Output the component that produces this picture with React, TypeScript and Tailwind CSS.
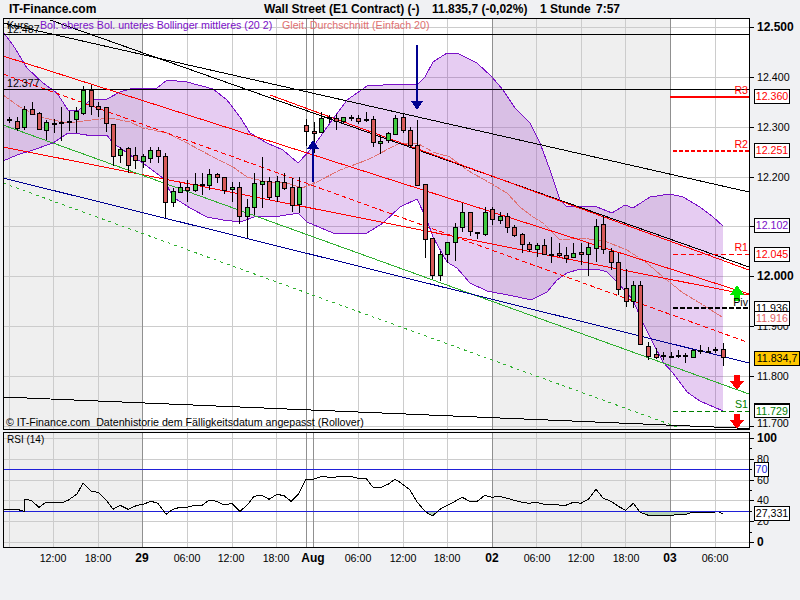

const UPPER = '3,32 13,45 27,68 43,83 57,93 68,110 78,111 90,100 107,99 120,92 133,88 157,88 167,80 187,82 213,89 227,100 240,117 250,133 267,143 283,150 298,163 313,147 330,123 347,100 367,86 400,84 417,85 425,77 433,62 447,53 457,53 477,63 492,77 503,90 515,108 530,123 540,143 550,170 560,200 566,206 578,206 597,207 612,213 625,205 633,208 650,197 670,194 683,197 700,207 712,216 723,226'
const LOWER = '723,411 700,401 687,392 673,373 663,362 653,343 643,323 633,300 617,282 607,272 597,269 580,269 567,273 557,280 547,292 533,299 527,299 513,296 487,291 470,283 457,268 447,262 433,237 427,220 417,199 400,207 383,223 367,233 333,233 307,222 298,213 293,214 280,216 257,216 240,222 223,220 207,217 190,208 173,197 163,178 143,163 133,157 113,143 107,135 93,136 80,134 68,133 53,143 33,150 17,155 3,161'
const MA = '3,95 20,107 40,117 67,123 83,121 110,118 130,122 143,128 167,133 187,143 213,157 233,167 247,177 267,182 287,183 302,188 317,182 340,170 367,160 400,143 417,143 433,152 450,157 467,170 490,183 507,193 520,207 533,217 543,223 560,240 583,238 607,242 627,250 647,263 663,277 683,293 700,303 722,317'

// x, high, body top, body bottom, low (3x zoom units), kind
const CANDLES: [number, number, number, number, number, string][] = [
  [28, 350, 358, 362, 370, 'd'], [50, 350, 362, 383, 392, 'r'], [73, 318, 328, 383, 390, 'g'], [95, 306, 328, 342, 345, 'r'],
  [117, 335, 340, 388, 390, 'r'], [139, 360, 367, 392, 420, 'g'], [161, 358, 368, 372, 400, 'd'], [184, 322, 366, 369, 423, 'd'],
  [206, 333, 363, 368, 393, 'd'], [229, 320, 334, 358, 398, 'g'], [250, 258, 270, 338, 345, 'g'], [272, 255, 270, 317, 345, 'r'],
  [295, 306, 317, 325, 350, 'r'], [317, 322, 322, 370, 395, 'r'], [339, 373, 373, 470, 497, 'r'], [361, 440, 448, 467, 490, 'g'],
  [384, 440, 445, 497, 520, 'r'], [406, 440, 465, 480, 507, 'r'], [428, 462, 468, 482, 503, 'g'], [451, 442, 450, 473, 490, 'g'],
  [473, 442, 451, 470, 488, 'r'], [496, 460, 469, 607, 655, 'r'], [518, 565, 574, 607, 620, 'g'], [541, 548, 560, 575, 580, 'g'],
  [562, 540, 560, 569, 605, 'r'], [584, 520, 552, 569, 577, 'g'], [606, 520, 552, 554, 585, 'd'], [628, 507, 522, 554, 570, 'g'],
  [651, 520, 523, 533, 550, 'r'], [673, 530, 532, 570, 582, 'r'], [696, 545, 562, 569, 605, 'g'], [718, 545, 562, 648, 672, 'r'],
  [740, 598, 622, 648, 714, 'g'], [763, 520, 550, 622, 645, 'g'], [785, 470, 543, 551, 625, 'g'], [808, 530, 542, 590, 600, 'r'],
  [830, 528, 544, 590, 605, 'g'], [852, 518, 545, 563, 570, 'r'], [875, 535, 562, 617, 635, 'r'], [897, 532, 562, 612, 640, 'g'],
  [919, 357, 376, 395, 437, 'r'], [941, 367, 394, 401, 460, 'r'], [964, 335, 355, 398, 400, 'g'], [986, 345, 350, 358, 370, 'd'],
  [1008, 343, 355, 365, 390, 'r'], [1030, 350, 352, 365, 372, 'g'], [1052, 345, 352, 355, 362, 'd'], [1075, 345, 355, 365, 372, 'r'],
  [1097, 335, 357, 362, 365, 'd'], [1119, 348, 358, 428, 442, 'r'], [1141, 405, 424, 430, 462, 'g'], [1164, 395, 400, 422, 430, 'g'],
  [1186, 345, 355, 402, 405, 'g'], [1210, 340, 350, 388, 398, 'r'], [1231, 380, 391, 437, 440, 'r'], [1252, 360, 436, 557, 557, 'r'],
  [1275, 553, 553, 718, 773, 'r'], [1297, 715, 715, 827, 838, 'r'], [1320, 752, 763, 827, 842, 'g'], [1342, 727, 727, 763, 788, 'g'],
  [1365, 670, 682, 727, 782, 'g'], [1387, 610, 637, 682, 695, 'g'], [1409, 637, 637, 695, 708, 'r'], [1432, 696, 696, 702, 717, 'd'],
  [1454, 620, 637, 702, 708, 'g'], [1477, 620, 628, 658, 675, 'r'], [1499, 635, 647, 658, 672, 'g'], [1521, 638, 648, 680, 698, 'r'],
  [1543, 675, 682, 705, 710, 'r'], [1565, 698, 703, 733, 758, 'r'], [1588, 725, 733, 748, 755, 'r'], [1610, 728, 735, 746, 772, 'g'],
  [1632, 718, 735, 763, 765, 'r'], [1654, 710, 761, 764, 788, 'd'], [1677, 728, 760, 767, 770, 'r'], [1698, 740, 765, 773, 788, 'r'],
  [1720, 730, 760, 772, 775, 'g'], [1743, 730, 757, 763, 795, 'r'], [1765, 730, 742, 763, 827, 'g'], [1788, 658, 677, 742, 787, 'g'],
  [1810, 648, 673, 748, 762, 'r'], [1833, 745, 752, 785, 810, 'r'], [1855, 758, 785, 865, 885, 'r'], [1877, 808, 865, 905, 920, 'r'],
  [1900, 842, 856, 905, 923, 'g'], [1921, 842, 856, 1032, 1032, 'r'], [1945, 1025, 1038, 1067, 1080, 'r'], [1967, 1045, 1063, 1073, 1077, 'r'],
  [1990, 1055, 1066, 1068, 1080, 'd'], [2012, 1055, 1067, 1069, 1075, 'd'], [2034, 1050, 1066, 1068, 1075, 'd'], [2056, 1058, 1064, 1066, 1088, 'd'],
  [2078, 1048, 1050, 1070, 1073, 'g'], [2101, 1035, 1050, 1052, 1063, 'd'], [2123, 1040, 1052, 1054, 1060, 'd'], [2146, 1040, 1048, 1050, 1058, 'd'],
  [2168, 1028, 1048, 1073, 1097, 'r'],
]

const RSI = '3,1529 10,1528 17,1528 24,1534 24,1498 31,1501 39,1522 46,1507 63,1507 68,1501 77,1482 83,1450 91,1473 98,1477 107,1503 113,1528 120,1516 128,1528 137,1516 143,1513 151,1504 158,1510 166,1543 173,1528 180,1522 188,1521 195,1516 202,1516 209,1501 217,1504 224,1515 232,1510 240,1534 247,1516 254,1489 262,1486 269,1498 277,1483 284,1487 291,1504 299,1480 306,1438 313,1438 321,1430 333,1432 343,1429 350,1429 357,1434 366,1435 373,1462 381,1462 388,1453 395,1438 400,1447'
const RSI_POINTS = RSI.split(' ').map(p => {
  const [x, y] = p.split(',').map(Number)
  return `${x},${(y / 3).toFixed(1)}`
}).join(' ')
const RSI2 = [[0, 172], [30, 195], [52, 232], [75, 259], [97, 273], [120, 253], [142, 241], [165, 229], [187, 217], [209, 229], [232, 229], [254, 211], [277, 217], [299, 214], [321, 220], [343, 226], [365, 232], [388, 235], [410, 232], [432, 238], [497, 241], [520, 232], [543, 235], [565, 223], [588, 193], [610, 220], [633, 229], [655, 244], [677, 256], [700, 235], [720, 262], [745, 271], [812, 271], [860, 267], [878, 262], [945, 262]]
const RSI2_POINTS = RSI2.map(([x, y]) => `${(400 + x / 3).toFixed(1)},${(425 + y / 3).toFixed(1)}`).join(' ')

const GRID_X = [9.5, 53.5, 98.5, 187.5, 232.5, 276.5, 358.5, 403.5, 447.5, 536.5, 581.5, 625.5, 715.5]
const DARK_X = [142.5, 306.5, 313.5, 492.5, 670.5]
const GRID_Y = [27, 77, 127, 177, 226, 276, 326, 376, 426]
const RSI_GRID_Y = [438, 459, 480, 500, 521, 542]

const AXIS = [
  { y: 27, t: '12.500', bold: true }, { y: 77, t: '12.400' }, { y: 127, t: '12.300' }, { y: 177, t: '12.200' }, { y: 226, t: '12.100' },
  { y: 276, t: '12.000', bold: true }, { y: 326, t: '11.900' }, { y: 376, t: '11.800' }, { y: 423, t: '11.700' },
]
const RSI_AXIS = [
  { y: 438, t: '100', bold: true }, { y: 459, t: '80' }, { y: 480, t: '60' }, { y: 500, t: '40' }, { y: 521, t: '20' }, { y: 542, t: '0', bold: true },
]
const TIMES = [
  { x: 53, t: '12:00' }, { x: 98, t: '18:00' }, { x: 142, t: '29', bold: true }, { x: 187, t: '06:00' }, { x: 231, t: '12:00' }, { x: 276, t: '18:00' },
  { x: 313, t: 'Aug', bold: true }, { x: 358, t: '06:00' }, { x: 403, t: '12:00' }, { x: 447, t: '18:00' }, { x: 492, t: '02', bold: true },
  { x: 537, t: '06:00' }, { x: 581, t: '12:00' }, { x: 626, t: '18:00' }, { x: 670, t: '03', bold: true }, { x: 715, t: '06:00' },
]

const BOXES = [
  { t: '12.360', c: 'top-[71px] text-[#ff0000]' },
  { t: '12.251', c: 'top-[125px] text-[#ff0000]' },
  { t: '12.102', c: 'top-[200px] text-[#7a10c8]' },
  { t: '12.045', c: 'top-[229px] text-[#ff0000]' },
  { t: '11.936', c: 'top-[283px] text-black' },
  { t: '11.916', c: 'top-[293px] text-[#e06060]' },
  { t: '11.729', c: 'top-[385px] text-[#008000] border-t-2' },
]

function Chart() {
  return (
    <svg viewBox="0 18 800 412" className="block w-[800px] h-[412px]" fill="none">
      <g shapeRendering="crispEdges">
        <rect x="3" y="18" width="746" height="411" fill="#ffffff" />
        <rect x="4" y="19" width="139" height="410" fill="#efefef" />
        <rect x="492" y="19" width="178" height="410" fill="#efefef" />
        {GRID_X.map(x => <line key={x} x1={x} y1="19" x2={x} y2="429" stroke="#cccccc" />)}
        {GRID_Y.map(y => <line key={y} x1="4" y1={y + 0.5} x2="749" y2={y + 0.5} stroke="#cccccc" />)}
        {DARK_X.map(x => <line key={x} x1={x} y1="19" x2={x} y2="429" stroke="#909090" />)}
      </g>
      <polygon points={`${UPPER} ${LOWER}`} fill="#8000c0" fillOpacity="0.2" />
      <g shapeRendering="crispEdges">
        <polyline points={UPPER} stroke="#7a10c8" />
        <polyline points={LOWER} stroke="#7a10c8" />
        <polyline points={MA} stroke="#e07070" strokeDasharray="7 1" />
        <line x1="3" y1="34.5" x2="749" y2="34.5" stroke="#000000" />
        <line x1="3" y1="89.5" x2="749" y2="89.5" stroke="#000000" />
        <line x1="50" y1="20" x2="749" y2="267" stroke="#000000" />
        <line x1="3" y1="23" x2="749" y2="192" stroke="#000000" />
        <line x1="3" y1="397" x2="749" y2="428.5" stroke="#000000" />
        <line x1="3" y1="56" x2="749" y2="294" stroke="#ff0000" />
        <line x1="270" y1="95" x2="749" y2="270" stroke="#ff0000" />
        <line x1="3" y1="147" x2="749" y2="295" stroke="#ff0000" />
        <line x1="3" y1="74" x2="747" y2="342" stroke="#ff0000" strokeDasharray="5 3" />
        <line x1="3" y1="125" x2="749" y2="394" stroke="#30b030" />
        <line x1="3" y1="183" x2="680" y2="428" stroke="#30b030" strokeDasharray="3 4" />
        <line x1="3" y1="178" x2="749" y2="363" stroke="#000090" />
        <line x1="670" y1="96.5" x2="749" y2="96.5" stroke="#ff0000" strokeWidth="2" />
        <line x1="673" y1="151" x2="749" y2="151" stroke="#ff0000" strokeWidth="2" strokeDasharray="4 2" />
        <line x1="673" y1="254.5" x2="749" y2="254.5" stroke="#ff0000" strokeDasharray="5 3" />
        <line x1="673" y1="308" x2="749" y2="308" stroke="#000000" strokeWidth="2" strokeDasharray="5 2" />
        <line x1="673" y1="411.5" x2="749" y2="411.5" stroke="#008000" strokeDasharray="5 3" />
        {CANDLES.map(([x, hi, top, bot, lo, kind]) => {
          const cx = Math.round(x / 3)
          return (
            <g key={x}>
              <line x1={cx + 0.5} y1={hi / 3} x2={cx + 0.5} y2={lo / 3} stroke="#000000" />
              {kind === 'd'
                ? <rect x={cx - 2} y={Math.round(top / 3)} width="5" height="2" fill="#000000" />
                : <rect x={cx - 1.5} y={Math.round(top / 3) + 0.5} width="4" height={Math.max(Math.round((bot - top) / 3), 1)} fill={kind === 'g' ? '#40c840' : '#d65a5a'} stroke="#000000" />}
            </g>
          )
        })}
        <rect x="3.5" y="18.5" width="746" height="411" stroke="#000000" />
        {GRID_Y.map(y => <line key={y} x1="749" y1={y + 0.5} x2="754" y2={y + 0.5} stroke="#000000" />)}
      </g>
      {/* arrows */}
      <g shapeRendering="crispEdges" fill="#000090">
        <rect x="312" y="147" width="2" height="35" />
        <polygon points="313,140 319,149 307,149" />
        <rect x="416" y="45" width="2" height="58" />
        <polygon points="417,110 411,101 423,101" />
        <polygon points="737,285 744,295 740,295 740,301 734,301 734,295 730,295" fill="#00e800" />
        <polygon points="737,390 744,381 740,381 740,375 734,375 734,381 730,381" fill="#ff0000" />
        <polygon points="737,429 744,420 740,420 740,414 734,414 734,420 730,420" fill="#ff0000" />
      </g>
      <g className="font-['Liberation_Sans',Arial,sans-serif]">
        {AXIS.map(a => (
          <text key={a.t} x="757" y={a.y + 4} fill="#000000" className={a.bold ? 'text-[12px] font-bold' : 'text-[10.67px]'}>{a.t}</text>
        ))}
        <text x="748" y="94" textAnchor="end" fill="#ff0000" className="text-[10.67px]">R3</text>
        <text x="748" y="148" textAnchor="end" fill="#ff0000" className="text-[10.67px]">R2</text>
        <text x="748" y="251" textAnchor="end" fill="#ff0000" className="text-[10.67px]">R1</text>
        <text x="748" y="306" textAnchor="end" fill="#000000" className="text-[10.67px]">Piv</text>
        <text x="748" y="408" textAnchor="end" fill="#008000" className="text-[10.67px]">S1</text>
      </g>
    </svg>
  )
}

function RsiChart() {
  return (
    <svg viewBox="0 432 800 116" className="block w-[800px] h-[116px]" fill="none">
      <g shapeRendering="crispEdges">
        <rect x="3" y="432" width="746" height="115" fill="#ffffff" />
        <rect x="4" y="433" width="139" height="114" fill="#efefef" />
        <rect x="492" y="433" width="178" height="114" fill="#efefef" />
        {GRID_X.map(x => <line key={x} x1={x} y1="433" x2={x} y2="547" stroke="#cccccc" />)}
        {RSI_GRID_Y.map(y => <line key={y} x1="4" y1={y + 0.5} x2="749" y2={y + 0.5} stroke="#cccccc" />)}
        {DARK_X.map(x => <line key={x} x1={x} y1="433" x2={x} y2="547" stroke="#909090" />)}
        <polygon points="640,511 647,515 671,515 687,514 693,512" fill="#b4d2b4" />
        <polygon points="425,511 432,516 440,511" fill="#b4d2b4" />
        <line x1="4" y1="469.5" x2="749" y2="469.5" stroke="#2020d8" />
        <line x1="4" y1="511.5" x2="749" y2="511.5" stroke="#2020d8" />
        <polyline points={RSI_POINTS} stroke="#000000" />
        <polyline points={RSI2_POINTS} stroke="#000000" />
        <line x1="719" y1="512" x2="723" y2="514" stroke="#000000" />
        <rect x="3.5" y="432.5" width="746" height="115" stroke="#000000" />
        {[0, 10, 20, 30, 40, 50, 60, 70, 80, 90, 100].map(v => (
          <line key={v} x1="749" y1={Math.round(542 - v * 1.04) + 0.5} x2={v % 20 === 0 ? 754 : 752} y2={Math.round(542 - v * 1.04) + 0.5} stroke="#000000" />
        ))}
      </g>
      <g className="font-['Liberation_Sans',Arial,sans-serif]">
        {RSI_AXIS.map(a => (
          <text key={a.t} x="757" y={a.y + 4} fill="#000000" className={a.bold ? 'text-[12px] font-bold' : 'text-[10.67px]'}>{a.t}</text>
        ))}
      </g>
    </svg>
  )
}

function TimeAxis() {
  return (
    <svg viewBox="0 548 800 20" className="block w-[800px] h-[20px] font-['Liberation_Sans',Arial,sans-serif]">
      {TIMES.map(t => (
        <text key={t.x} x={t.x} y="562" textAnchor="middle" fill="#000000" className={t.bold ? 'text-[12px] font-bold' : 'text-[10.67px]'}>{t.t}</text>
      ))}
    </svg>
  )
}

export default function App() {
  return (
    <div className="w-[800px] h-[600px] overflow-hidden bg-[#f0f1f3] text-black font-['Liberation_Sans',Arial,sans-serif]">
      <div className="flex h-[18px] items-center pl-[9px] text-[12px] font-bold leading-none whitespace-pre">
        <div className="w-[255px]">IT-Finance.com</div>
        <div className="w-[168px]">Wall Street (E1 Contract) (-)</div>
        <div className="w-[108px]">11.835,7 (-0,02%)</div>
        <div className="w-[56px]">1 Stunde</div>
        <div>7:57</div>
      </div>

      <div className="relative">
        <Chart />
        {/* legend row lies over the plot */}
        <div className="absolute inset-x-0 top-[1px] flex pl-[7px] text-[10.67px] leading-[13px] whitespace-pre">
          <div className="w-[33px]">Kurs</div>
          <div className="w-[242px] text-[#7a10c8]">Bol. oberes Bol. unteres Bollinger mittleres (20 2)</div>
          <div className="text-[#e07070]">Gleit. Durchschnitt (Einfach 20)</div>
        </div>
        <div className="absolute left-[7px] top-[5px] text-[10.67px] leading-[13px]">12.487</div>
        <div className="absolute left-[7px] top-[59px] text-[10.67px] leading-[13px]">12.377</div>
        <div className="absolute bottom-[1px] left-[6px] text-[10.67px] leading-[13px] whitespace-pre">© IT-Finance.com  Datenhistorie dem Fälligkeitsdatum angepasst (Rollover)</div>
        {BOXES.map(b => (
          <div key={b.t} className={`absolute left-[754px] w-[36px] h-[15px] border border-black bg-white text-center text-[10.67px] leading-[13px] ${b.c}`}>{b.t}</div>
        ))}
        <div className="absolute left-[754px] top-[333px] w-[46px] h-[15px] border border-black bg-[#ffc800] text-center text-[10.67px] leading-[13px]">11.834,7</div>
      </div>

      <div className="relative mt-[2px]">
        <RsiChart />
        <div className="absolute left-[7px] top-[1px] text-[10px] leading-[13px]">RSI (14)</div>
        <div className="absolute left-[754px] top-[30px] w-[15px] h-[15px] border border-black bg-white text-center text-[10.67px] leading-[13px] text-[#2020d8]">70</div>
        <div className="absolute left-[754px] top-[74px] w-[36px] h-[15px] border border-black bg-white text-center text-[10.67px] leading-[13px]">27,331</div>
      </div>

      <TimeAxis />
    </div>
  )
}
